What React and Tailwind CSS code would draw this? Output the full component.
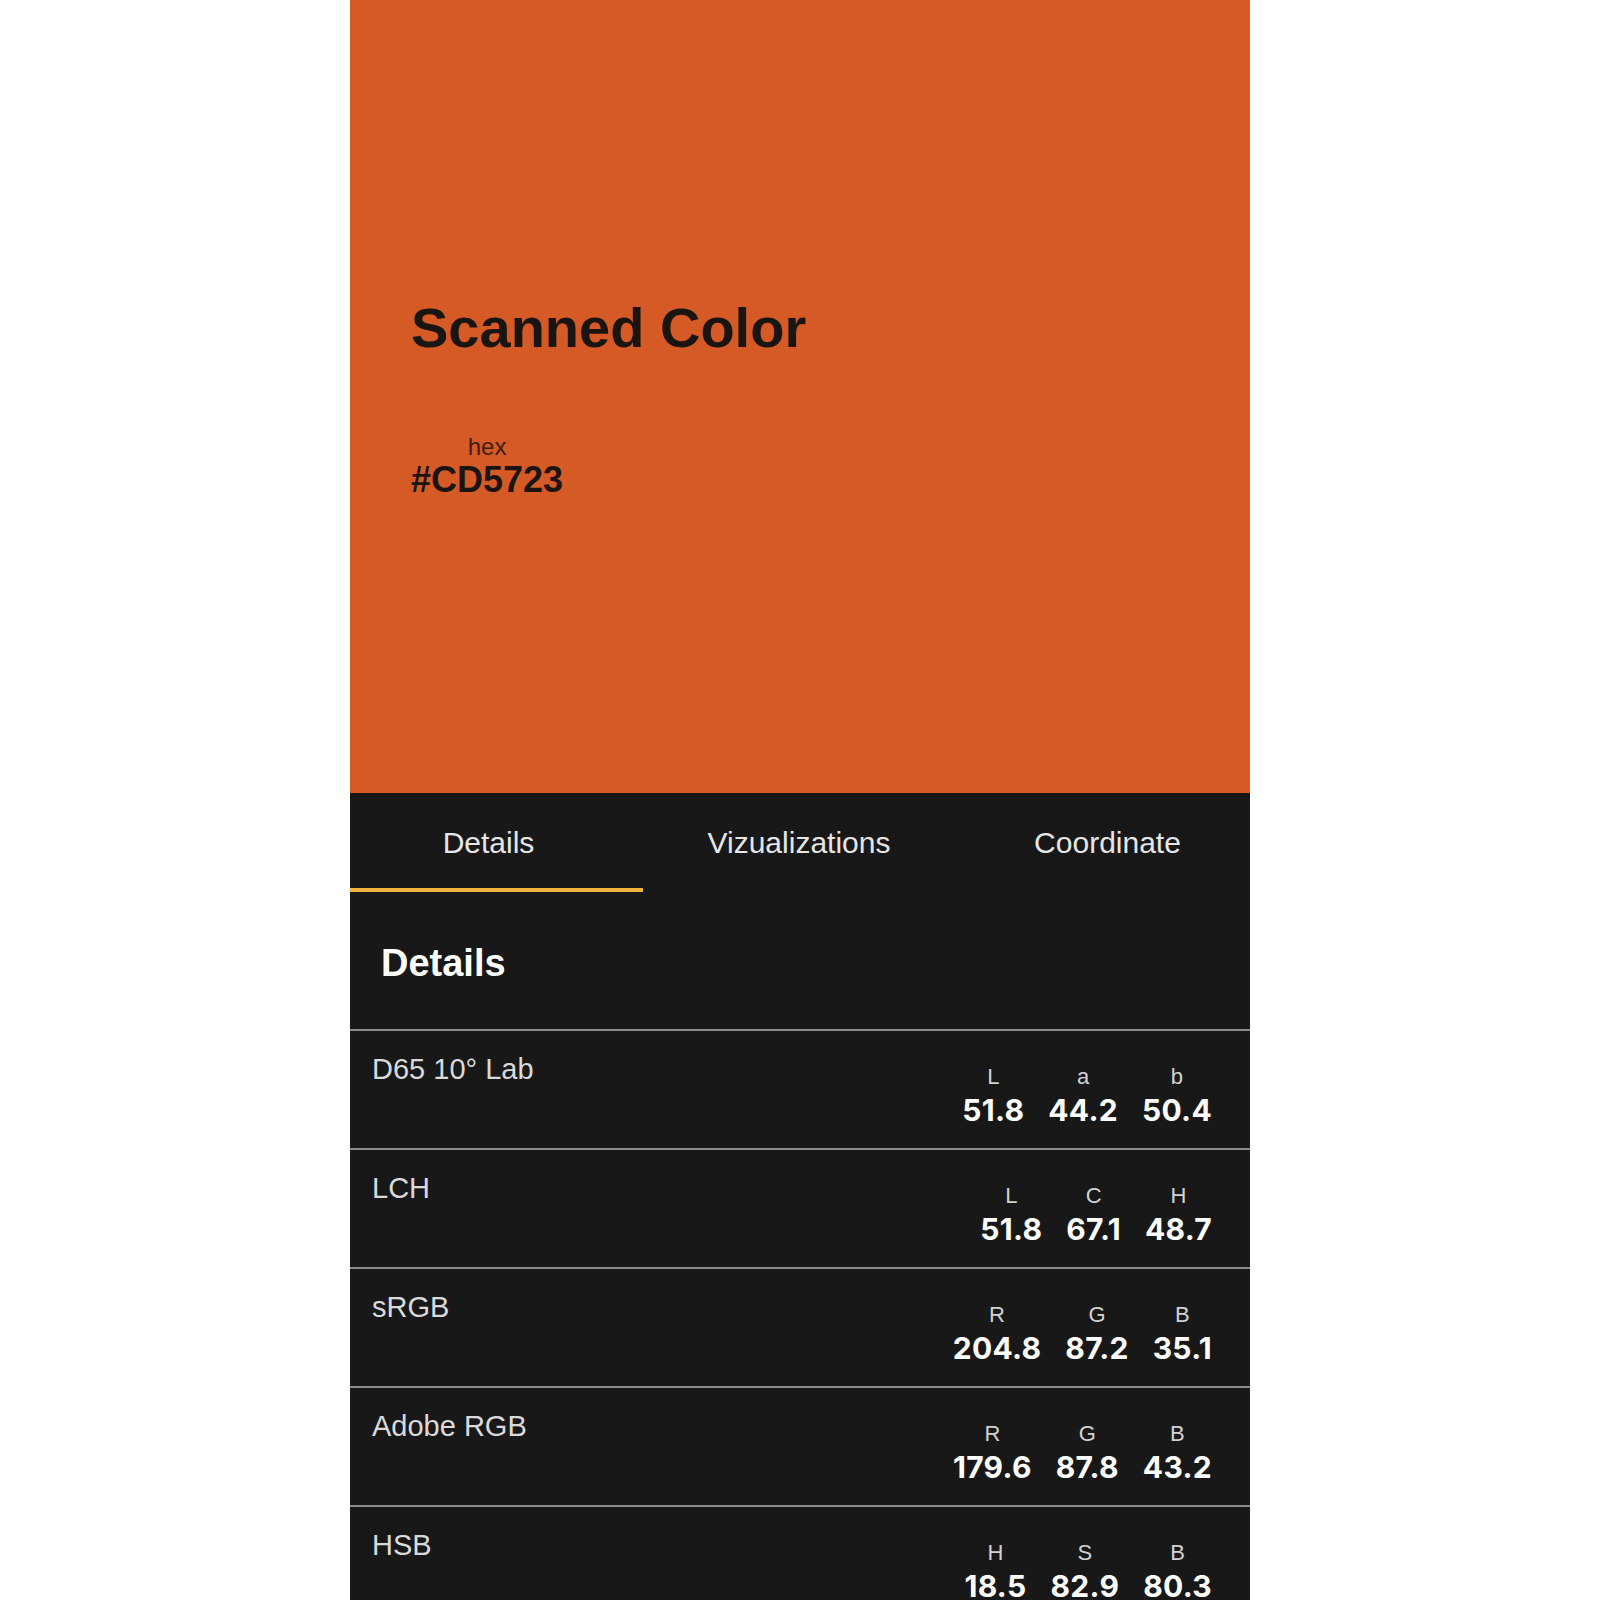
import React from "react";

const rows = [
  { name: "D65 10° Lab", keys: ["L", "a", "b"], values: ["51.8", "44.2", "50.4"] },
  { name: "LCH", keys: ["L", "C", "H"], values: ["51.8", "67.1", "48.7"] },
  { name: "sRGB", keys: ["R", "G", "B"], values: ["204.8", "87.2", "35.1"] },
  { name: "Adobe RGB", keys: ["R", "G", "B"], values: ["179.6", "87.8", "43.2"] },
  { name: "HSB", keys: ["H", "S", "B"], values: ["18.5", "82.9", "80.3"] },
];

const sans = "font-['Liberation_Sans',Arial,sans-serif]";

const DetailRow = ({ row }) => (
  <div className="h-[119px] border-t-2 border-[#8c8c8c] flex justify-between items-start pl-[22px] pr-[38px]">
    {/* Color space name */}
    <span className={`${sans} mt-[24px] text-[29px] leading-none text-[#dadada]`}>
      {row.name}
    </span>

    {/* Channel values */}
    <div className="mt-[35px] flex gap-[24px]">
      {row.keys.map((k, i) => (
        <div key={k + i} className="flex flex-col items-center">
          <span className={`${sans} text-[22px] leading-none text-[#d2d2d2]`}>{k}</span>
          <span className="mt-[7px] font-['Inter',sans-serif] font-bold text-[30px] leading-none tracking-[0.3px] text-white">
            {row.values[i]}
          </span>
        </div>
      ))}
    </div>
  </div>
);

export default function App() {
  return (
    <div className="w-full h-[1600px] bg-white flex justify-center overflow-hidden">
      <div className="w-[900px] h-[1600px] flex flex-col overflow-hidden">
        {/* Color swatch */}
        <div className="h-[793px] shrink-0 bg-[#D55A26] pl-[61px] pt-[300px]">
          <h1 className={`${sans} font-bold text-[56px] leading-none text-[#1b1511]`}>
            Scanned Color
          </h1>
          <div className="mt-[79px] inline-flex flex-col items-center">
            <span className={`${sans} text-[24px] leading-none text-[#3d1f10]`}>hex</span>
            <span className={`${sans} mt-[3px] font-bold text-[36px] leading-none text-[#1b1511]`}>
              #CD5723
            </span>
          </div>
        </div>

        {/* Dark details panel */}
        <div className="flex-1 bg-[#181818]">
          {/* Tabs */}
          <div className="flex pt-[35px]">
            <div className="w-[293px] flex flex-col">
              <span className={`${sans} pr-[16px] text-center text-[30px] leading-none text-[#e6e6e6]`}>
                Details
              </span>
              <div className="mt-[30px] h-[4px] bg-[#EFB23C]" />
            </div>
            <div className="w-[312px]">
              <span className={`${sans} block text-center text-[30px] leading-none text-[#e6e6e6]`}>
                Vizualizations
              </span>
            </div>
            <div className="flex-1">
              <span className={`${sans} block pl-[10px] text-center text-[30px] leading-none text-[#e6e6e6]`}>
                Coordinate
              </span>
            </div>
          </div>

          {/* Section heading */}
          <h2 className={`${sans} mt-[52px] pl-[31px] font-bold text-[38px] leading-none text-white`}>
            Details
          </h2>

          <div className="mt-[47px]">
            {rows.map((r) => (
              <DetailRow key={r.name} row={r} />
            ))}
          </div>
        </div>
      </div>
    </div>
  );
}
